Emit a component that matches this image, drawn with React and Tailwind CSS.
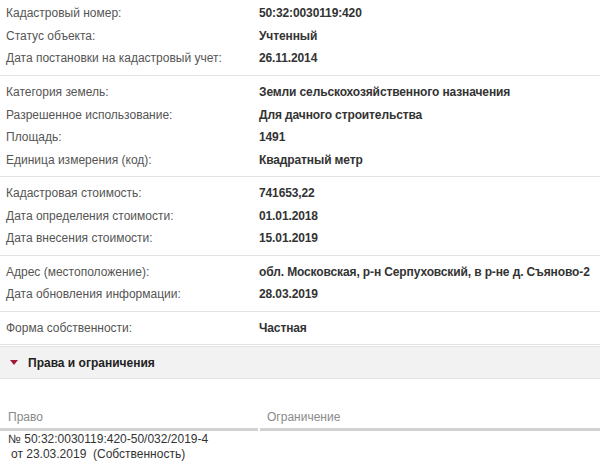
const groups = [
  [
    ["Кадастровый номер:", "50:32:0030119:420"],
    ["Статус объекта:", "Учтенный"],
    ["Дата постановки на кадастровый учет:", "26.11.2014"],
  ],
  [
    ["Категория земель:", "Земли сельскохозяйственного назначения"],
    ["Разрешенное использование:", "Для дачного строительства"],
    ["Площадь:", "1491"],
    ["Единица измерения (код):", "Квадратный метр"],
  ],
  [
    ["Кадастровая стоимость:", "741653,22"],
    ["Дата определения стоимости:", "01.01.2018"],
    ["Дата внесения стоимости:", "15.01.2019"],
  ],
  [
    ["Адрес (местоположение):", "обл. Московская, р-н Серпуховский, в р-не д. Съяново-2"],
    ["Дата обновления информации:", "28.03.2019"],
  ],
  [["Форма собственности:", "Частная"]],
];

function Row({ label, value }) {
  return (
    <div className="flex h-[22.5px] items-center">
      <div className="w-[259px] shrink-0 pl-[6px] text-[#555]">{label}</div>
      <div className="font-bold text-[#333] tracking-[-0.12px] whitespace-nowrap">{value}</div>
    </div>
  );
}

export default function App() {
  return (
    <div className="w-[600px] h-[463px] overflow-hidden bg-white text-[12px] font-['Liberation_Sans',Arial,sans-serif]">
      {groups.map((rows, i) => (
        <div
          key={i}
          className={
            i === 0
              ? "pt-[2px] pb-[5.5px] border-b border-[#e2e2e2]"
              : "py-[5px] border-b border-[#e2e2e2]"
          }
        >
          {rows.map(([l, v]) => (
            <Row key={l} label={l} value={v} />
          ))}
        </div>
      ))}

      <div className="mt-[1px] h-[33px] flex items-center bg-[#f3f2f3] border-t border-[#d4d4d4] border-b border-[#e4e4e4]">
        <svg width="8" height="6" viewBox="0 0 8 6" className="ml-[10px] mr-[10px]">
          <path d="M0 0 L8 0 L4 5 Z" fill="#a01c34" />
        </svg>
        <span className="text-[12px] font-bold text-[#222]">Права и ограничения</span>
      </div>

      <div className="pt-[26px]">
        <div className="flex h-[23px] items-center text-[#8a8a8a]">
          <div className="w-[258px] pl-[8px]">Право</div>
          <div className="pl-[9px]">Ограничение</div>
        </div>
        <div className="flex gap-[2px] h-[3px]">
          <div className="w-[258px] bg-[#d2d2d2]" />
          <div className="flex-1 bg-[#d2d2d2]" />
        </div>
        <div className="pl-[8px] pt-[1px] leading-[15px] text-[#333]">
          <div>№ 50:32:0030119:420-50/032/2019-4</div>
          <div className="pl-[3px] whitespace-pre">от 23.03.2019  (Собственность)</div>
        </div>
      </div>
    </div>
  );
}
